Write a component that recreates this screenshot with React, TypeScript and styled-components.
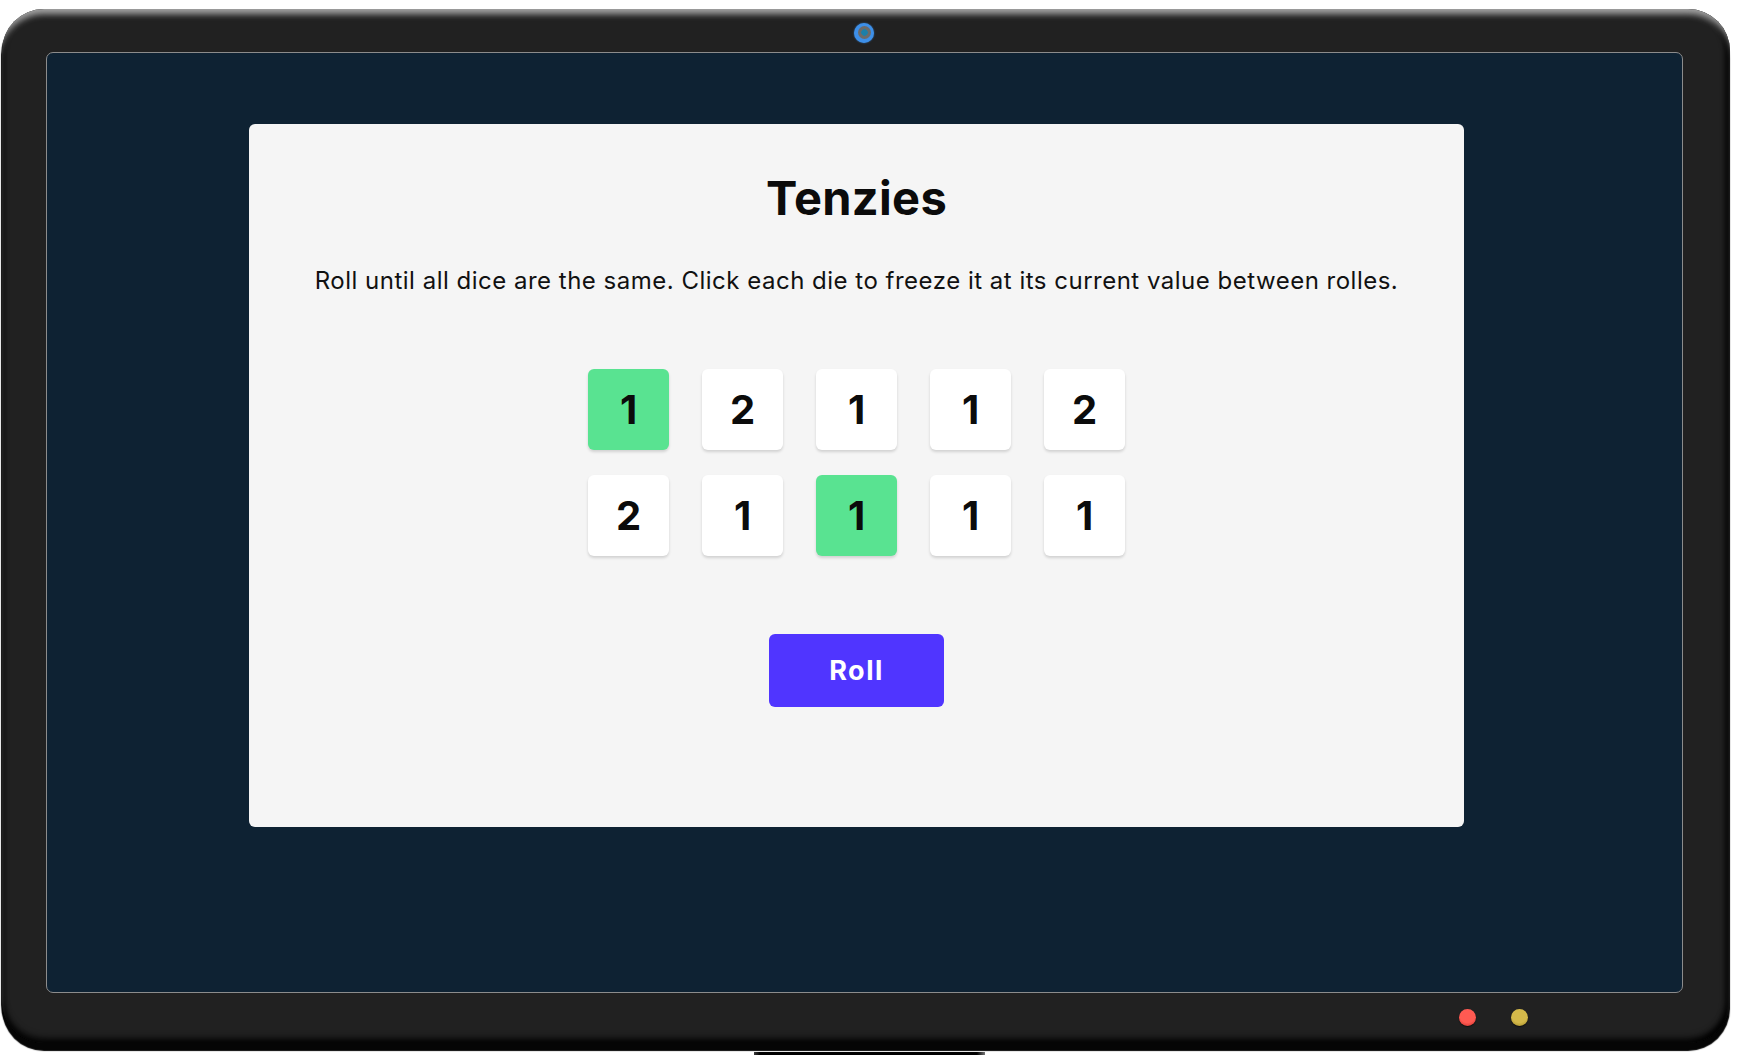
import React from "react";
import styled, { createGlobalStyle } from "styled-components";

const Global = createGlobalStyle`
  html, body { margin: 0; padding: 0; background: #ffffff; }
  body { font-family: Inter, "Noto Sans", "DejaVu Sans", sans-serif; overflow: hidden; }
  * { box-sizing: border-box; }
`;

const Page = styled.div`
  width: 1738px;
  height: 1055px;
  padding: 9px 8px 0 2px;
  display: flex;
  flex-direction: column;
  align-items: stretch;
  overflow: hidden;
`;

const Frame = styled.div`
  flex-shrink: 0;
  width: 1728px;
  height: 1034px;
  border-radius: 42px;
  background: #212121;
  display: flex;
  flex-direction: column;
  box-shadow:
    inset 0 8px 6px -3px rgba(215, 215, 215, 0.75),
    inset 0 -5px 6px rgba(0, 0, 0, 0.75),
    inset 3px 0 4px rgba(0, 0, 0, 0.5),
    inset -5px 0 5px rgba(0, 0, 0, 0.8),
    0 8px 1px #050505,
    -1px 4px 1px #050505;
`;

const TopBezel = styled.div`
  flex-shrink: 0;
  height: 43px;
  display: flex;
  align-items: center;
  justify-content: center;
  padding-top: 4px;
  padding-right: 4px;
`;

const Camera = styled.div`
  width: 20px;
  height: 20px;
  border-radius: 50%;
  background: #3d8fe8;
  display: flex;
  align-items: center;
  justify-content: center;
  box-shadow: 0 0 2px rgba(61, 143, 232, 0.7);
  &::after {
    content: "";
    width: 13px;
    height: 13px;
    border-radius: 50%;
    background: radial-gradient(circle, #1d7fa8 0 3px, #6b6b6b 3.5px);
  }
`;

const ScreenRow = styled.div`
  flex: 1;
  display: flex;
  padding: 0 47px 0 44px;
`;

const Screen = styled.div`
  flex: 1;
  border: 1px solid #8c8c8c;
  border-radius: 7px;
  background: #0e2233;
  padding: 71px 218px 0 202px;
`;

const Card = styled.main`
  height: 703px;
  background: #f5f5f5;
  border-radius: 6px;
  display: flex;
  flex-direction: column;
  align-items: center;
  padding-top: 46px;
`;

const Title = styled.h1`
  margin: 0;
  font-size: 47px;
  line-height: 56px;
  font-weight: 700;
  color: #0b0b0b;
  letter-spacing: 0.3px;
`;

const Description = styled.p`
  margin: 40px 0 0 0;
  font-size: 24px;
  line-height: 30px;
  font-weight: 400;
  color: #111;
  letter-spacing: 0.5px;
  white-space: nowrap;
`;

const DiceGrid = styled.div`
  margin-top: 73px;
  display: grid;
  grid-template-columns: repeat(5, 81px);
  grid-auto-rows: 81px;
  column-gap: 33px;
  row-gap: 25px;
`;

const Die = styled.button<{ $held: boolean }>`
  border: none;
  padding: 0;
  border-radius: 6px;
  background: ${(p) => (p.$held ? "#59e391" : "#ffffff")};
  box-shadow: 0 2px 3px rgba(0, 0, 0, 0.15);
  display: flex;
  align-items: center;
  justify-content: center;
  font-family: Inter, "Noto Sans", sans-serif;
  font-size: 40px;
  font-weight: 700;
  color: #0b0b0b;
  cursor: pointer;
`;

const RollButton = styled.button`
  margin-top: 78px;
  width: 175px;
  height: 73px;
  border: none;
  border-radius: 6px;
  background: #5035ff;
  color: #ffffff;
  font-family: Inter, "Noto Sans", sans-serif;
  font-size: 27px;
  font-weight: 700;
  letter-spacing: 1.5px;
  cursor: pointer;
`;

const BottomBezel = styled.div`
  flex-shrink: 0;
  height: 50px;
  display: flex;
  align-items: center;
  justify-content: flex-end;
  gap: 35px;
  padding-right: 202px;
  padding-bottom: 2px;
`;

const Light = styled.div<{ $color: string; $shade: string }>`
  width: 17px;
  height: 17px;
  border-radius: 50%;
  background: radial-gradient(circle at 50% 35%, ${(p) => p.$color} 0 55%, ${(p) => p.$shade} 100%);
  box-shadow: 0 1px 1px rgba(0, 0, 0, 0.6);
`;

const Stand = styled.div`
  flex-shrink: 0;
  margin: 9px 0 0 752px;
  width: 231px;
  height: 20px;
  background: linear-gradient(90deg, #3a3a3a 0, #000 6px, #000 calc(100% - 8px), #777 100%);
`;

const dice = [
  { v: 1, held: true },
  { v: 2, held: false },
  { v: 1, held: false },
  { v: 1, held: false },
  { v: 2, held: false },
  { v: 2, held: false },
  { v: 1, held: false },
  { v: 1, held: true },
  { v: 1, held: false },
  { v: 1, held: false },
];

export default function App() {
  return (
    <>
      <Global />
      <Page>
        <Frame>
          <TopBezel>
            <Camera />
          </TopBezel>
          <ScreenRow>
            <Screen>
              <Card>
                <Title>Tenzies</Title>
                <Description>
                  Roll until all dice are the same. Click each die to freeze it at its current value between rolles.
                </Description>
                <DiceGrid>
                  {dice.map((d, i) => (
                    <Die key={i} $held={d.held}>
                      {d.v}
                    </Die>
                  ))}
                </DiceGrid>
                <RollButton>Roll</RollButton>
              </Card>
            </Screen>
          </ScreenRow>
          <BottomBezel>
            <Light $color="#ff5a52" $shade="#c92a25" />
            <Light $color="#d4b94a" $shade="#9a8220" />
          </BottomBezel>
        </Frame>
        <Stand />
      </Page>
    </>
  );
}
